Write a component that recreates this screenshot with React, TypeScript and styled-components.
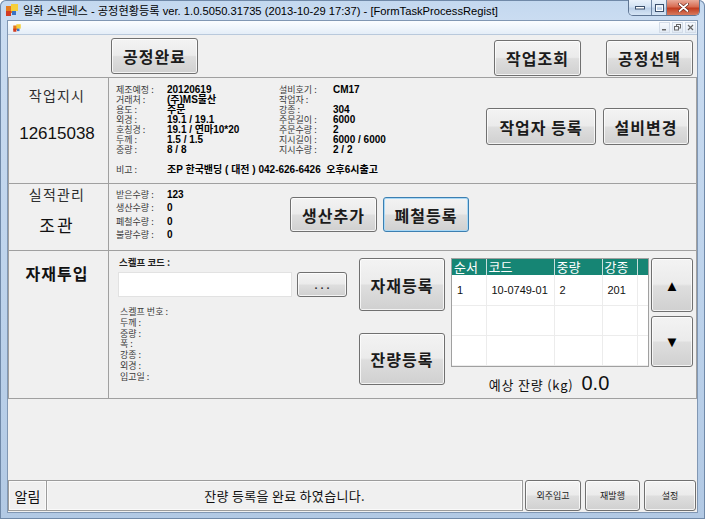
import React from "react";
import styled, { createGlobalStyle, css } from "styled-components";

const FONT = `"Liberation Sans", "Noto Sans CJK KR", sans-serif`;
const KFONT = `"Noto Sans CJK KR", "Liberation Sans", sans-serif`;

const Global = createGlobalStyle`
  html, body { margin: 0; padding: 0; background: #ffffff; }
  body { font-family: ${FONT}; }
  * { box-sizing: border-box; }
`;

const Window = styled.div`
  width: 705px;
  height: 519px;
  display: flex;
  flex-direction: column;
  background: linear-gradient(to bottom, #c3d8ef 0px, #cadcf1 20px, #bcd2eb 60%, #b2c9e4 100%);
  border-radius: 6px 6px 0 0;
  box-shadow: inset 0 0 0 1px #7089a8;
`;

const TitleBar = styled.div`
  height: 20px;
  flex: none;
  display: flex;
  align-items: center;
  padding-left: 4px;
`;

const TitleText = styled.span`
  margin-left: 3px;
  font-family: ${FONT};
  font-size: 11.2px;
  color: #000;
  white-space: nowrap;
`;

const Caption = styled.div`
  margin-left: auto;
  margin-right: 5px;
  align-self: flex-start;
  display: flex;
  height: 16px;
  border: 1px solid #5f7593;
  border-top: none;
  border-radius: 0 0 5px 5px;
  overflow: hidden;
`;

const CapBtn = styled.div<{ $w: number; $close?: boolean }>`
  width: ${(p) => p.$w}px;
  display: flex;
  align-items: center;
  justify-content: center;
  background: ${(p) =>
    p.$close
      ? "linear-gradient(#e9ab9a, #d86c52 45%, #c23c1f 55%, #d77a5e)"
      : "linear-gradient(#eaf2fb, #d3e2f3 45%, #bcd0e8 55%, #d6e5f5)"};
  & + & {
    border-left: 1px solid #6f86a4;
  }
`;

const Client = styled.div`
  flex: 1;
  min-height: 0;
  margin: 0 7px 6px 7px;
  border: 1px solid #8197b3;
  display: flex;
  flex-direction: column;
`;

const MdiBar = styled.div`
  height: 14px;
  flex: none;
  display: flex;
  align-items: center;
  padding-left: 4px;
  background: linear-gradient(#fbfdff, #e5eef8);
  border-bottom: 1px solid #b9c9dc;
`;

const MdiControls = styled.div`
  margin-left: auto;
  margin-right: 1px;
  display: flex;
  gap: 2px;
`;

const MdiBox = styled.div`
  width: 11px;
  height: 11px;
  display: flex;
  align-items: center;
  justify-content: center;
  background: linear-gradient(#f6f9fd, #e2eaf4);
  border: 1px solid #d3dce8;
`;

const Content = styled.div`
  flex: 1;
  min-height: 0;
  background: #f0f0f0;
  display: flex;
  flex-direction: column;
`;

const TopBar = styled.div`
  height: 42px;
  flex: none;
  display: flex;
  align-items: center;
  padding: 0 4px 0 103px;
`;

const RightTools = styled.div`
  margin-left: auto;
  display: flex;
  gap: 25px;
  margin-top: 3px;
`;

const Btn = styled.button<{ $w: number; $h: number; $focus?: boolean }>`
  width: ${(p) => p.$w}px;
  height: ${(p) => p.$h}px;
  flex: none;
  padding: 0;
  margin: 0;
  display: flex;
  align-items: center;
  justify-content: center;
  font-family: ${KFONT};
  font-weight: bold;
  font-size: 16px;
  letter-spacing: 1px;
  color: #1b1b1b;
  border: 1px solid ${(p) => (p.$focus ? "#3c7fb1" : "#707070")};
  border-radius: 3px;
  background: linear-gradient(#f3f3f3, #ebebeb 48%, #dedede 52%, #d0d0d0);
  box-shadow: inset 0 0 0 1px ${(p) => (p.$focus ? "#a8d8f6" : "rgba(255,255,255,0.75)")};
`;

const SmallBtn = styled(Btn)`
  font-size: 9px;
  font-weight: normal;
  letter-spacing: 0;
  color: #222;
`;

const DotsBtn = styled(Btn)`
  font-family: ${FONT};
  font-size: 11px;
  letter-spacing: 3px;
  padding-left: 3px;
  color: #333;
`;

const ArrowBtn = styled(Btn)`
  font-family: ${FONT};
  font-size: 15px;
  color: #000;
  letter-spacing: 0;
`;

const Grid = styled.div`
  flex: none;
  display: grid;
  grid-template-columns: 99px 1fr;
  grid-template-rows: 105px 66px 147px;
  gap: 1px;
  background: #a0a0a0;
  border: 1px solid #a0a0a0;
`;

const Cell = styled.div`
  background: #f0f0f0;
  min-width: 0;
`;

const HeadCell = styled(Cell)<{ $pt: number }>`
  display: flex;
  flex-direction: column;
  align-items: center;
  padding-top: ${(p) => p.$pt}px;
  padding-right: 3px;
`;

const SectionLabel = styled.div`
  font-family: ${KFONT};
  font-size: 14px;
  line-height: 16px;
  letter-spacing: 1.2px;
  color: #2e2e2e;
`;

const SectionTitle = styled.div`
  font-family: ${KFONT};
  font-size: 16px;
  font-weight: bold;
  line-height: 16px;
  letter-spacing: 1px;
  color: #111;
`;

const BigValue = styled.div<{ $mt: number; $kr?: boolean }>`
  margin-top: ${(p) => p.$mt}px;
  font-family: ${(p) => (p.$kr ? KFONT : FONT)};
  font-size: 17px;
  line-height: 20px;
  letter-spacing: ${(p) => (p.$kr ? "2px" : "0")};
  color: #111;
`;

const OrderCell = styled(Cell)`
  display: flex;
  padding: 7px 7px 0 7px;
`;

const InfoColumn = styled.div`
  display: flex;
  flex-direction: column;
`;

const InfoGrid = styled.div<{ $cols: string; $row: number }>`
  display: grid;
  grid-template-columns: ${(p) => p.$cols};
  grid-auto-rows: ${(p) => p.$row}px;
  align-items: center;
`;

const Lbl = styled.div`
  display: block;
  height: 10px;
  font-family: ${KFONT};
  font-size: 9px;
  line-height: 10px;
  color: #3c3c3c;
  white-space: nowrap;
`;

const Val = styled.div<{ $wide?: boolean }>`
  display: block;
  height: 10px;
  font-family: ${FONT};
  font-size: 10px;
  line-height: 10px;
  font-weight: bold;
  color: #000;
  white-space: nowrap;
  ${(p) =>
    p.$wide &&
    css`
      grid-column: 2 / -1;
    `}
`;

const Remark = styled(InfoGrid)`
  margin-top: 10px;
`;

const ButtonPair = styled.div<{ $mt: number; $gap: number }>`
  display: flex;
  gap: ${(p) => p.$gap}px;
  margin-top: ${(p) => p.$mt}px;
  margin-left: auto;
`;

const ResultCell = styled(Cell)`
  display: flex;
  padding: 4px 0 0 7px;
`;

const ResultButtons = styled.div`
  display: flex;
  gap: 6px;
  margin-top: 9px;
`;

const MaterialCell = styled(Cell)`
  display: flex;
  padding: 6px 0 0 9px;
`;

const ScanColumn = styled.div`
  width: 229px;
  flex: none;
  display: flex;
  flex-direction: column;
`;

const ScanLabel = styled.div`
  font-family: ${KFONT};
  font-size: 9.5px;
  line-height: 10px;
  height: 10px;
  font-weight: bold;
  color: #222;
  padding-left: 1px;
`;

const ScanRow = styled.div`
  display: flex;
  gap: 5px;
  margin-top: 5px;
`;

const CodeInput = styled.div`
  width: 174px;
  height: 25px;
  background: #fff;
  border: 1px solid #e2e2e2;
`;

const SpecList = styled.div`
  margin-top: 10px;
  padding-left: 2px;
  display: flex;
  flex-direction: column;
`;

const SpecItem = styled.div`
  height: 10.8px;
  font-family: ${KFONT};
  font-size: 9px;
  line-height: 10.8px;
  color: #3a3a3a;
`;

const ActionColumn = styled.div`
  margin-left: 12px;
  margin-top: 1px;
  display: flex;
  flex-direction: column;
  gap: 22px;
`;

const TableColumn = styled.div`
  margin-left: 6px;
  margin-top: 1px;
  width: 198px;
  display: flex;
  flex-direction: column;
`;

const TableBox = styled.div`
  width: 198px;
  height: 109px;
  background: #fff;
  border: 1px solid #a0a0a0;
  overflow: hidden;
`;

const DataTable = styled.table`
  width: 196px;
  border-collapse: collapse;
  table-layout: fixed;
`;

const Th = styled.th<{ $w: number }>`
  width: ${(p) => p.$w}px;
  height: 16px;
  padding: 0 0 0 2px;
  background: #168574;
  color: #fff;
  font-family: ${KFONT};
  font-weight: normal;
  font-size: 13px;
  line-height: 16px;
  text-align: left;
  border-right: 1px solid #c9dedb;
  &:last-child {
    border-right: none;
  }
`;

const Td = styled.td`
  height: 30px;
  padding: 0 0 0 5px;
  font-family: ${FONT};
  font-size: 11px;
  color: #111;
  border-right: 1px solid #ececec;
  border-bottom: 1px solid #ececec;
`;

const Estimate = styled.div`
  margin-top: 5px;
  display: flex;
  align-items: baseline;
  justify-content: center;
  gap: 8px;
  padding-right: 2px;
`;

const EstimateLabel = styled.span`
  font-family: ${KFONT};
  font-size: 13px;
  letter-spacing: 0.8px;
  color: #111;
`;

const EstimateValue = styled.span`
  font-family: ${FONT};
  font-size: 20px;
  color: #111;
`;

const ArrowColumn = styled.div`
  margin-left: 2px;
  margin-top: 1px;
  display: flex;
  flex-direction: column;
  gap: 4px;
`;

const Spacer = styled.div`
  flex: 1;
`;

const StatusBar = styled.div`
  height: 31px;
  flex: none;
  display: flex;
  margin-bottom: 1px;
`;

const StatusBox = styled.div<{ $w?: number }>`
  ${(p) => (p.$w ? `width: ${p.$w}px; flex: none;` : "flex: 1;")}
  display: flex;
  align-items: center;
  justify-content: center;
  border: 1px solid #9c9c9c;
  box-shadow: inset 0 0 0 1px #fafafa;
  font-family: ${KFONT};
  color: #111;
  & + & {
    border-left: none;
  }
`;

const AlarmText = styled.span`
  font-size: 14px;
`;

const MessageText = styled.span`
  font-size: 13px;
  letter-spacing: 0.3px;
`;

const StatusButtons = styled.div`
  display: flex;
  gap: 4px;
  margin-left: 2px;
  margin-right: 1px;
`;

const AppIcon = () => (
  <svg width="16" height="16" viewBox="0 0 16 16">
    <rect x="2" y="4" width="7" height="7" fill="#e47a1e" />
    <rect x="7" y="2" width="7" height="7" fill="#f5cf3a" />
    <rect x="2" y="9" width="5" height="5" fill="#d23b22" />
    <rect x="8" y="9" width="4" height="4" fill="#3a72c4" />
  </svg>
);

const SmallAppIcon = () => (
  <svg width="10" height="10" viewBox="0 0 16 16">
    <rect x="2" y="4" width="7" height="7" fill="#e47a1e" />
    <rect x="7" y="2" width="7" height="7" fill="#f5cf3a" />
    <rect x="2" y="9" width="5" height="5" fill="#d23b22" />
    <rect x="8" y="9" width="4" height="4" fill="#3a72c4" />
  </svg>
);

const orderLeft: [string, string][] = [
  ["제조예정 :", "20120619"],
  ["거래처 :", "(주)MS물산"],
  ["용도 :", "주문"],
  ["외경 :", "19.1 / 19.1"],
  ["호칭경 :", "19.1 / 연마10*20"],
  ["두께 :", "1.5 / 1.5"],
  ["중량 :", "8 / 8"],
];

const orderRight: [string, string][] = [
  ["설비호기 :", "CM17"],
  ["작업자 :", ""],
  ["강종 :", "304"],
  ["주문길이 :", "6000"],
  ["주문수량 :", "2"],
  ["지시길이 :", "6000 / 6000"],
  ["지시수량 :", "2 / 2"],
];

const results: [string, string][] = [
  ["받은수량 :", "123"],
  ["생산수량 :", "0"],
  ["폐철수량 :", "0"],
  ["불량수량 :", "0"],
];

const specs = ["스켈프 번호 :", "두께 :", "중량 :", "폭 :", "강종 :", "외경 :", "입고일 :"];

const rows: string[][] = [
  ["1", "10-0749-01", "2", "201", ""],
  ["", "", "", "", ""],
  ["", "", "", "", ""],
  ["", "", "", "", ""],
];

export default function App() {
  return (
    <>
      <Global />
      <Window>
        <TitleBar>
          <AppIcon />
          <TitleText>
            일화 스텐레스 - 공정현황등록 ver. 1.0.5050.31735 (2013-10-29 17:37) - [FormTaskProcessRegist]
          </TitleText>
          <Caption>
            <CapBtn $w={22}>
              <svg width="10" height="5" viewBox="0 0 10 5">
                <rect x="0.5" y="1.5" width="9" height="2.5" fill="#fff" stroke="#3b4f6b" strokeWidth="1" />
              </svg>
            </CapBtn>
            <CapBtn $w={15}>
              <svg width="9" height="8" viewBox="0 0 9 8">
                <rect x="0.5" y="0.5" width="8" height="7" fill="none" stroke="#3b4f6b" strokeWidth="1" />
                <rect x="1.5" y="2" width="6" height="4.5" fill="none" stroke="#fff" strokeWidth="1" />
              </svg>
            </CapBtn>
            <CapBtn $w={33} $close>
              <svg width="11" height="9" viewBox="0 0 11 9">
                <path d="M1.5 1 L9.5 8 M9.5 1 L1.5 8" stroke="#5a1a10" strokeWidth="3" strokeLinecap="round" />
                <path d="M1.5 1 L9.5 8 M9.5 1 L1.5 8" stroke="#fff" strokeWidth="1.8" strokeLinecap="round" />
              </svg>
            </CapBtn>
          </Caption>
        </TitleBar>
        <Client>
          <MdiBar>
            <SmallAppIcon />
            <MdiControls>
              <MdiBox>
                <svg width="7" height="7" viewBox="0 0 7 7">
                  <rect x="1" y="5" width="4" height="1.5" fill="#666" />
                </svg>
              </MdiBox>
              <MdiBox>
                <svg width="7" height="7" viewBox="0 0 7 7">
                  <rect x="2.5" y="0.5" width="4" height="3.5" fill="none" stroke="#666" strokeWidth="1" />
                  <rect x="0.5" y="2.5" width="4" height="3.5" fill="#eef2f8" stroke="#666" strokeWidth="1" />
                </svg>
              </MdiBox>
              <MdiBox>
                <svg width="7" height="7" viewBox="0 0 7 7">
                  <path d="M1 1 L6 6 M6 1 L1 6" stroke="#666" strokeWidth="1.2" />
                </svg>
              </MdiBox>
            </MdiControls>
          </MdiBar>
          <Content>
            <TopBar>
              <Btn $w={87} $h={36}>공정완료</Btn>
              <RightTools>
                <Btn $w={87} $h={36}>작업조회</Btn>
                <Btn $w={87} $h={36}>공정선택</Btn>
              </RightTools>
            </TopBar>
            <Grid>
              <HeadCell $pt={9}>
                <SectionLabel>작업지시</SectionLabel>
                <BigValue $mt={21}>12615038</BigValue>
              </HeadCell>
              <OrderCell>
                <InfoColumn>
                  <InfoGrid $cols="51px 112px 54px 90px" $row={10}>
                    {orderLeft.map(([l, v], i) => (
                      <React.Fragment key={l}>
                        <Lbl>{l}</Lbl>
                        <Val>{v}</Val>
                        <Lbl>{orderRight[i][0]}</Lbl>
                        <Val>{orderRight[i][1]}</Val>
                      </React.Fragment>
                    ))}
                  </InfoGrid>
                  <Remark $cols="51px 256px" $row={10}>
                    <Lbl>비고 :</Lbl>
                    <Val>조P 한국밴딩 ( 대전 ) 042-626-6426&nbsp;&nbsp;오후6시출고</Val>
                  </Remark>
                </InfoColumn>
                <ButtonPair $mt={23} $gap={7}>
                  <Btn $w={110} $h={37}>작업자 등록</Btn>
                  <Btn $w={86} $h={37}>설비변경</Btn>
                </ButtonPair>
              </OrderCell>

              <HeadCell $pt={2}>
                <SectionLabel>실적관리</SectionLabel>
                <BigValue $mt={13} $kr>조관</BigValue>
              </HeadCell>
              <ResultCell>
                <InfoGrid $cols="51px 123px" $row={13.5}>
                  {results.map(([l, v]) => (
                    <React.Fragment key={l}>
                      <Lbl>{l}</Lbl>
                      <Val>{v}</Val>
                    </React.Fragment>
                  ))}
                </InfoGrid>
                <ResultButtons>
                  <Btn $w={87} $h={35}>생산추가</Btn>
                  <Btn $w={86} $h={35} $focus>폐철등록</Btn>
                </ResultButtons>
              </ResultCell>

              <HeadCell $pt={14}>
                <SectionTitle>자재투입</SectionTitle>
              </HeadCell>
              <MaterialCell>
                <ScanColumn>
                  <ScanLabel>스켈프 코드 :</ScanLabel>
                  <ScanRow>
                    <CodeInput />
                    <DotsBtn $w={50} $h={25}>...</DotsBtn>
                  </ScanRow>
                  <SpecList>
                    {specs.map((s) => (
                      <SpecItem key={s}>{s}</SpecItem>
                    ))}
                  </SpecList>
                </ScanColumn>
                <ActionColumn>
                  <Btn $w={86} $h={53}>자재등록</Btn>
                  <Btn $w={86} $h={52}>잔량등록</Btn>
                </ActionColumn>
                <TableColumn>
                  <TableBox>
                    <DataTable>
                      <thead>
                        <tr>
                          <Th $w={34}>순서</Th>
                          <Th $w={68}>코드</Th>
                          <Th $w={48}>중량</Th>
                          <Th $w={35}>강종</Th>
                          <Th $w={11}></Th>
                        </tr>
                      </thead>
                      <tbody>
                        {rows.map((r, i) => (
                          <tr key={i}>
                            {r.map((c, j) => (
                              <Td key={j}>{c}</Td>
                            ))}
                          </tr>
                        ))}
                      </tbody>
                    </DataTable>
                  </TableBox>
                  <Estimate>
                    <EstimateLabel>예상 잔량 (kg)</EstimateLabel>
                    <EstimateValue>0.0</EstimateValue>
                  </Estimate>
                </TableColumn>
                <ArrowColumn>
                  <ArrowBtn $w={42} $h={54}>▲</ArrowBtn>
                  <ArrowBtn $w={42} $h={51}>▼</ArrowBtn>
                </ArrowColumn>
              </MaterialCell>
            </Grid>
            <Spacer />
            <StatusBar>
              <StatusBox $w={39}>
                <AlarmText>알림</AlarmText>
              </StatusBox>
              <StatusBox>
                <MessageText>잔량 등록을 완료 하였습니다.</MessageText>
              </StatusBox>
              <StatusButtons>
                <SmallBtn $w={56} $h={31}>외주입고</SmallBtn>
                <SmallBtn $w={55} $h={31}>재발행</SmallBtn>
                <SmallBtn $w={52} $h={31}>설정</SmallBtn>
              </StatusButtons>
            </StatusBar>
          </Content>
        </Client>
      </Window>
    </>
  );
}
